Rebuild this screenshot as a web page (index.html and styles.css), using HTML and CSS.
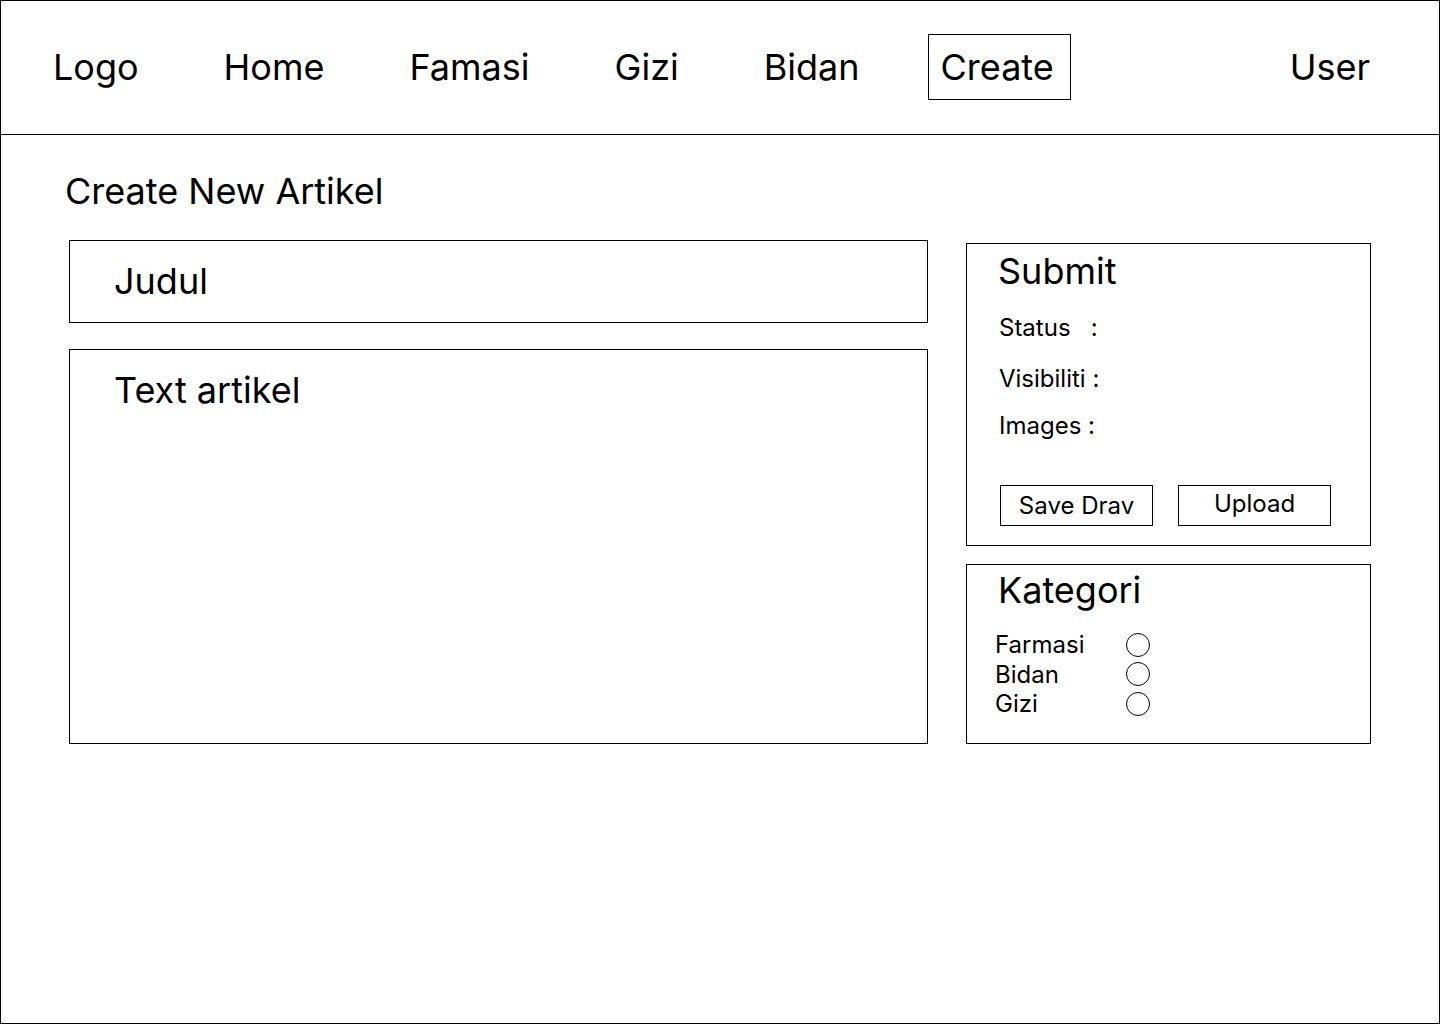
FILE: index.html
```html
<!DOCTYPE html>
<html lang="id">
<head>
<meta charset="utf-8">
<title>Create New Artikel</title>
<link rel="stylesheet" href="styles.css">
</head>
<body>
<div class="frame">
  <header class="topbar">
    <nav class="nav">
      <span class="nav-item">Logo</span>
      <span class="nav-item">Home</span>
      <span class="nav-item">Famasi</span>
      <span class="nav-item">Gizi</span>
      <span class="nav-item">Bidan</span>
      <span class="nav-item active">Create</span>
    </nav>
    <span class="nav-user">User</span>
  </header>
  <main class="main">
    <h1 class="page-title">Create New Artikel</h1>
    <div class="content">
      <div class="left-col">
        <div class="box judul">Judul</div>
        <div class="box artikel">Text artikel</div>
      </div>
      <div class="right-col">
        <section class="panel submit">
          <h2 class="panel-title">Submit</h2>
          <p class="field f-status">Status&nbsp;&nbsp;&nbsp;:</p>
          <p class="field f-vis">Visibiliti :</p>
          <p class="field f-img">Images :</p>
          <div class="buttons">
            <span class="btn btn-save">Save Drav</span>
            <span class="btn btn-upload">Upload</span>
          </div>
        </section>
        <section class="panel kategori">
          <h2 class="panel-title">Kategori</h2>
          <div class="options">
            <span class="opt-label">Farmasi</span><span class="radio"></span>
            <span class="opt-label">Bidan</span><span class="radio"></span>
            <span class="opt-label">Gizi</span><span class="radio"></span>
          </div>
        </section>
      </div>
    </div>
  </main>
</div>
</body>
</html>
```

FILE: styles.css
```css
* { box-sizing: border-box; }
html, body { margin: 0; padding: 0; background: #fff; }
body {
  font-family: Inter, "Noto Sans", "Liberation Sans", sans-serif;
  color: #000;
}
.frame {
  width: 1440px;
  height: 1024px;
  border: 1px solid #000;
  display: flex;
  flex-direction: column;
}
.topbar {
  height: 134px;
  border-bottom: 1px solid #000;
  display: flex;
  align-items: center;
  padding: 0 69px 2px 39px;
  font-size: 36px;
}
.nav {
  display: flex;
  align-items: center;
  gap: 59px;
}
.nav-item {
  display: flex;
  align-items: center;
  height: 66px;
  padding: 0 12px;
  border: 1px solid transparent;
  line-height: 44px;
}
.nav-item.active {
  border-color: #000;
  margin-left: -4px;
  padding-right: 16px;
}
.nav-user { margin-left: auto; line-height: 44px; }

.main {
  padding: 34px 0 0 64px;
}
.page-title {
  margin: 0;
  font-size: 36px;
  font-weight: 400;
  line-height: 44px;
}
.content {
  display: flex;
  gap: 38px;
  margin: 27px 0 0 4px;
  align-items: flex-start;
}
.left-col {
  width: 859px;
  display: flex;
  flex-direction: column;
  gap: 26px;
}
.box {
  border: 1px solid #000;
  font-size: 36px;
  line-height: 44px;
  padding: 18px 0 0 44px;
}
.judul { height: 83px; }
.artikel { height: 395px; }

.right-col {
  width: 405px;
  margin-top: 3px;
  display: flex;
  flex-direction: column;
  gap: 18px;
}
.panel {
  border: 1px solid #000;
  padding-left: 31px;
}
.panel-title {
  margin: 0;
  font-size: 36px;
  font-weight: 400;
  line-height: 44px;
}
.submit { height: 303px; padding-top: 5px; }
.field {
  margin: 0 0 0 1px;
  font-size: 24px;
  line-height: 29px;
}
.f-status { margin-top: 20px; }
.f-vis { margin-top: 22px; }
.f-img { margin-top: 18px; }
.buttons {
  display: flex;
  gap: 25px;
  margin-top: 45px;
  margin-left: 2px;
}
.btn {
  width: 153px;
  height: 41px;
  border: 1px solid #000;
  font-size: 24px;
  line-height: 29px;
  display: flex;
  justify-content: center;
}
.btn-save { padding-top: 5px; }
.btn-upload { padding-top: 3px; }

.kategori { height: 180px; padding-top: 3px; }
.options {
  margin: 18px 0 0 -3px;
  display: grid;
  grid-template-columns: 131px 24px;
  grid-auto-rows: 29.5px;
  align-items: center;
  font-size: 24px;
  line-height: 29px;
}
.radio {
  width: 24px;
  height: 24px;
  border: 1px solid #000;
  border-radius: 50%;
}
```
